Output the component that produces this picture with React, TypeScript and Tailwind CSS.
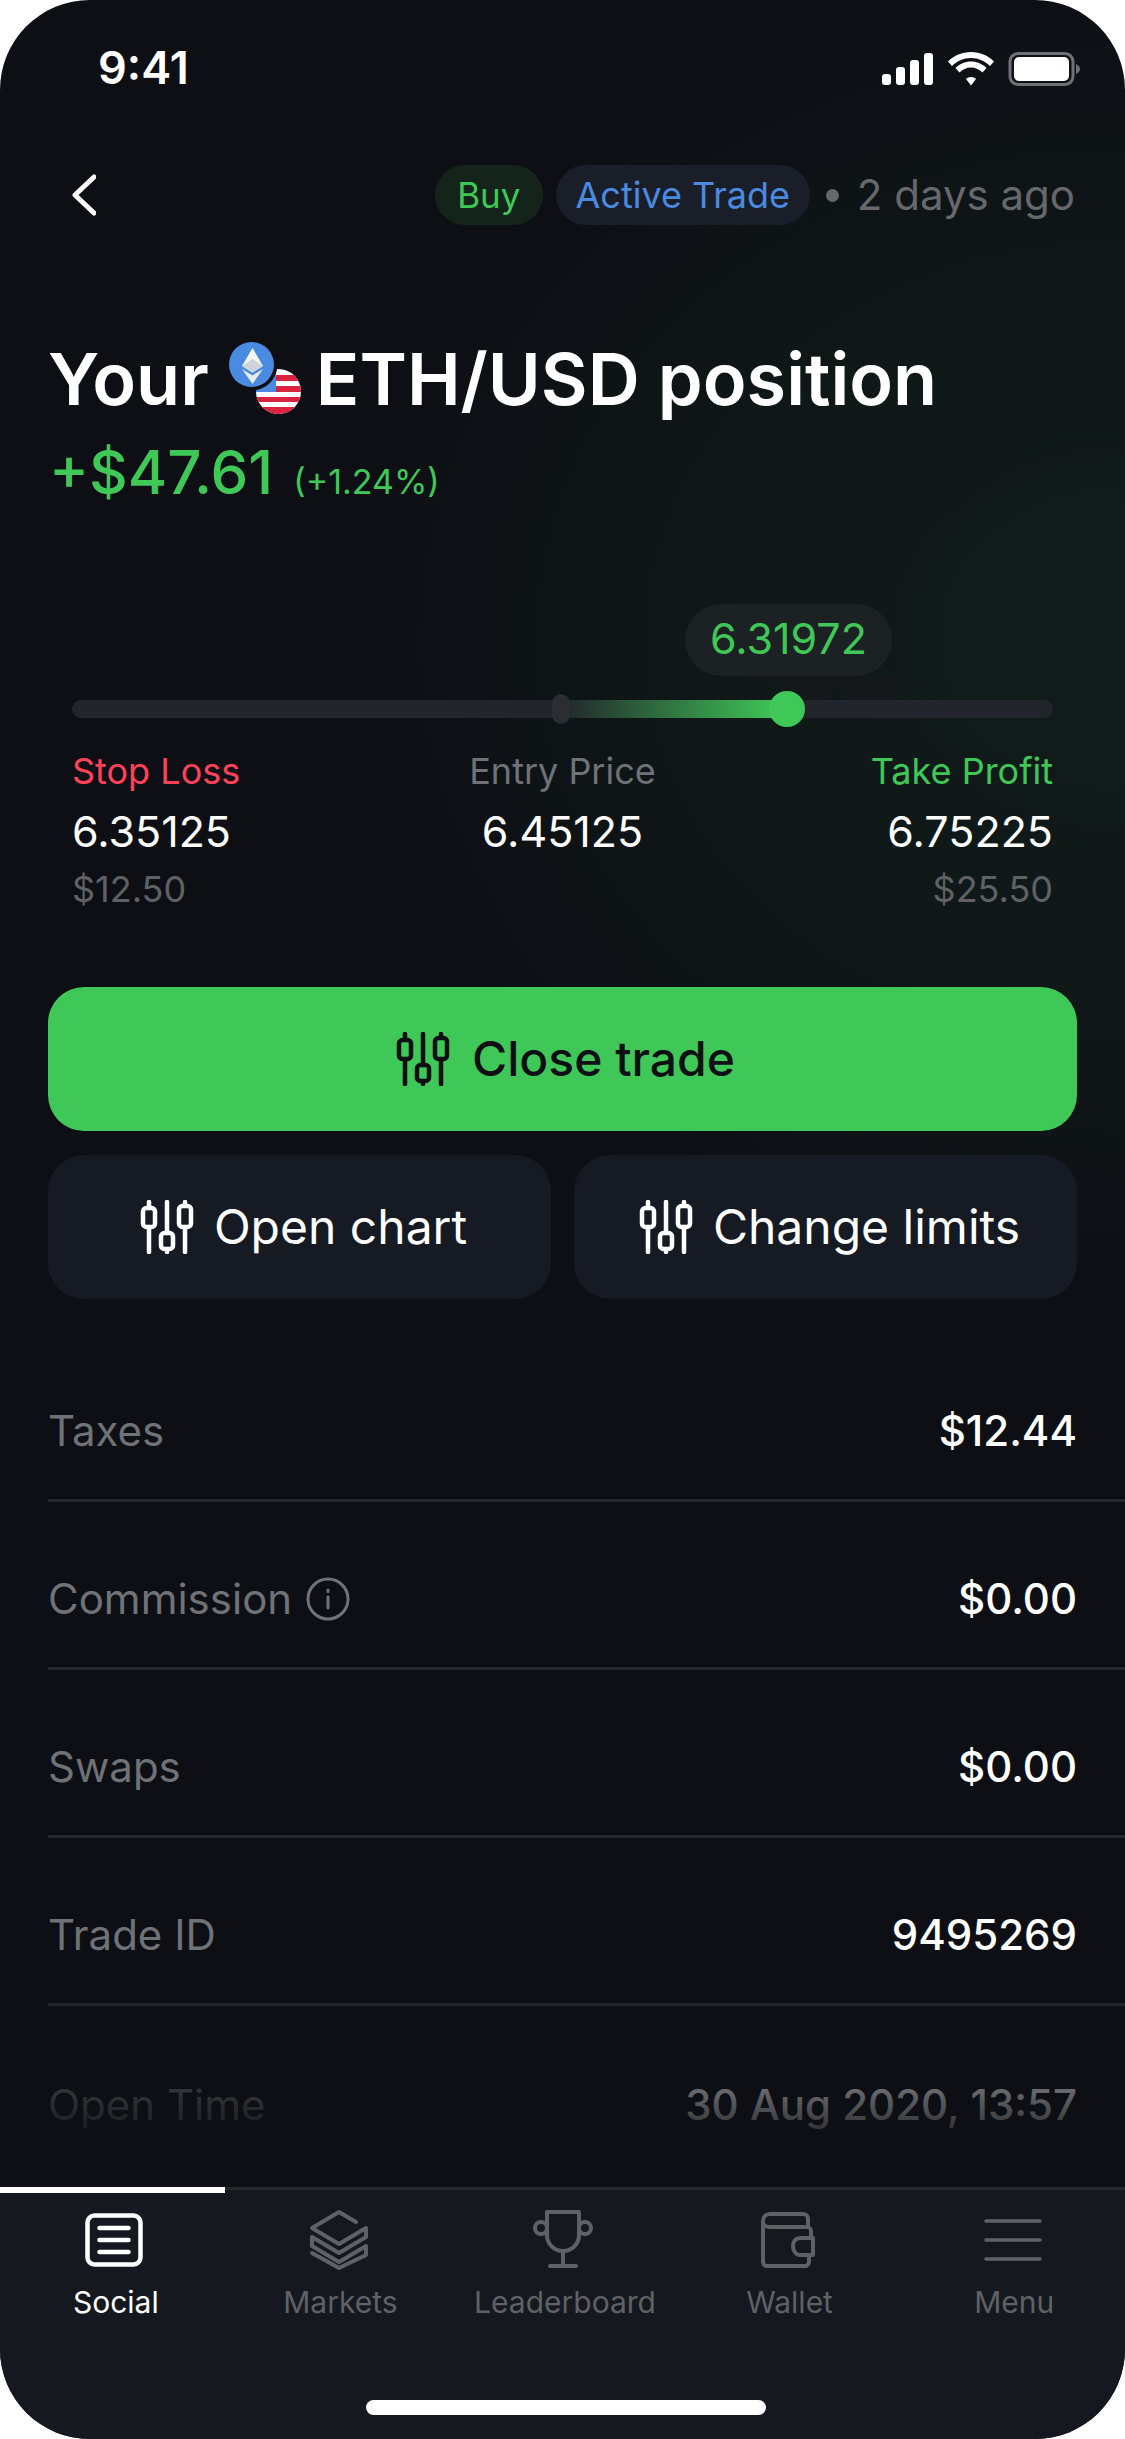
import React from "react";

function CandleIcon({ className }: { className?: string }) {
  return (
    <svg viewBox="0 0 54 54" className={className} fill="none" stroke="currentColor" strokeWidth="4.500" strokeLinecap="round" strokeLinejoin="round">
      <path d="M9 2v6M9 27v25M27 2v31M27 49v3M45 2v3M45 27v25" />
      <rect x="3" y="8" width="12" height="19" rx="3.500" />
      <rect x="21" y="33" width="12" height="16" rx="3.500" />
      <rect x="39" y="6" width="12" height="21" rx="3.500" />
    </svg>
  );
}

function PairIcon() {
  return (
    <svg viewBox="0 0 72 72" className="w-[72px] h-[72px] shrink-0">
      <defs>
        <clipPath id="flag">
          <circle cx="49.5" cy="49.5" r="22.5" />
        </clipPath>
      </defs>
      <g clipPath="url(#flag)">
        <rect x="27" y="27" width="45" height="45" fill="#fff" />
        <rect x="27" y="33" width="45" height="6" fill="#d9233f" />
        <rect x="27" y="44" width="45" height="6" fill="#d9233f" />
        <rect x="27" y="55" width="45" height="5" fill="#d9233f" />
        <rect x="27" y="65" width="45" height="7" fill="#d9233f" />
        <rect x="27" y="27" width="20" height="23" fill="#4a8ae0" />
        <circle cx="40" cy="38" r="2.2" fill="#fff" />
      </g>
      <circle cx="22.5" cy="22.5" r="26" fill="#0d0f14" />
      <circle cx="22.5" cy="22.5" r="22.5" fill="#4a8ae0" />
      <path d="M23.5 6L13 24l10.5 6.5L34 24z" fill="#f4f5f7" />
      <path d="M23.5 17L13 24l10.5 6.5L34 24z" fill="#cfd4da" />
      <path d="M13 27l10.5 15L34 27l-10.5 6.5z" fill="#e9ebee" />
    </svg>
  );
}

function StatusIcons() {
  return (
    <svg viewBox="0 0 200 34" className="w-[200px] h-[34px] block" fill="#fff">
      <rect x="0" y="22" width="9" height="11" rx="3" />
      <rect x="14" y="15" width="9" height="18" rx="3" />
      <rect x="28" y="8" width="9" height="25" rx="3" />
      <rect x="42" y="1" width="9" height="32" rx="3" />
      <path d="M89 0C80 0 72 3.500 66 9.500l4 4.500c5-5 11.500-8 19-8s14 3 19 8l4-4.500C106 3.500 98 0 89 0z" />
      <path d="M89 9.500c-6 0-11.500 2.500-15.500 6.500l4 4.500c3-3 7-5 11.500-5s8.500 2 11.500 5l4-4.500C100.500 12 95 9.500 89 9.500z" />
      <path d="M89 25c2 0 3.800.8 5 2l-5 6.500-5-6.500c1.200-1.200 3-2 5-2z" />
      <rect x="128" y="1.500" width="63" height="31" rx="8" fill="none" stroke="#6f7175" strokeWidth="3" />
      <rect x="132" y="5" width="55" height="24" rx="5" />
      <path d="M194 12c2.500 1 4 3 4 5s-1.500 4-4 5z" fill="#6f7175" />
    </svg>
  );
}

function SocialIcon() {
  return (
    <svg viewBox="0 0 58 54" className="w-[58px] h-[54px]" fill="none" stroke="#fff" strokeWidth="4.500" strokeLinecap="round">
      <rect x="2.500" y="2.500" width="53" height="49" rx="7" />
      <path d="M14.500 15h29M14.500 27h29M14.500 39h29" />
    </svg>
  );
}

function MarketsIcon() {
  return (
    <svg viewBox="0 0 60 62" className="w-[60px] h-[62px]" fill="none" stroke="#5f6165" strokeWidth="4" strokeLinecap="round" strokeLinejoin="round">
      <path d="M47 13L30 3 3 19l27 16 27-16v9L30 44 3 28v9l27 16 27-16v9L30 59 3 44" />
    </svg>
  );
}

function TrophyIcon() {
  return (
    <svg viewBox="0 0 60 60" className="w-[60px] h-[60px]" fill="none" stroke="#5f6165" strokeWidth="4" strokeLinecap="round" strokeLinejoin="round">
      <path d="M14 2h32v23c0 9-7 16-16 16s-16-7-16-16z" />
      <path d="M30 41v15M17 56h26" />
      <circle cx="8" cy="18" r="6" />
      <circle cx="52" cy="18" r="6" />
    </svg>
  );
}

function WalletIcon() {
  return (
    <svg viewBox="0 0 54 56" className="w-[54px] h-[56px]" fill="none" stroke="#5f6165" strokeWidth="4" strokeLinecap="round" strokeLinejoin="round">
      <path d="M47 14V7c0-3-2-5-5-5H9C5 2 2 5 2 9v41c0 2 2 4 4 4h38c2 0 4-2 4-4v-6" />
      <path d="M2 10c0 3 3 5 6 5h38c2 0 4 2 4 4v7" />
      <path d="M52 26H39c-4 0-7 3-7 8s3 9 7 9h13z" />
    </svg>
  );
}

function MenuIcon() {
  return (
    <svg viewBox="0 0 58 44" className="w-[58px] h-[44px]" fill="none" stroke="#5f6165" strokeWidth="3.500" strokeLinecap="round">
      <path d="M2 3h54M2 22h54M2 41h54" />
    </svg>
  );
}

const rows = [
  { label: "Taxes", value: "$12.44" },
  { label: "Commission", value: "$0.00", info: true },
  { label: "Swaps", value: "$0.00" },
  { label: "Trade ID", value: "9495269" },
];

const tabs = [
  { label: "Social", icon: <SocialIcon />, active: true },
  { label: "Markets", icon: <MarketsIcon /> },
  { label: "Leaderboard", icon: <TrophyIcon /> },
  { label: "Wallet", icon: <WalletIcon /> },
  { label: "Menu", icon: <MenuIcon /> },
];

export default function App() {
  return (
    <div className="w-[1125px] h-[2439px] bg-white overflow-hidden font-['Inter',sans-serif]">
      <div className="relative w-full h-full rounded-[90px] overflow-hidden bg-[#0d0f14] flex flex-col">
        <div className="absolute inset-0 bg-[radial-gradient(760px_640px_at_1120px_640px,rgba(38,100,58,0.16),rgba(38,100,58,0.09)_60%,transparent_100%)]" />

        <div className="relative flex flex-col flex-1 min-h-0">
          {/* status bar */}
          <div className="h-[136px] flex justify-between pl-[98px] pr-[43px] pt-[42px]">
            <span className="text-[45px] leading-[52px] font-semibold text-white">9:41</span>
            <div className="pt-[10px]">
              <StatusIcons />
            </div>
          </div>

          {/* header */}
          <div className="h-[90px] flex items-center justify-between pl-[72px] pr-[50px] mt-[14px]">
            <svg viewBox="0 0 24 42" className="w-[24px] h-[42px]" fill="none" stroke="#fff" strokeWidth="5" strokeLinecap="round" strokeLinejoin="round">
              <path d="M22 3L3 21l19 18" />
            </svg>
            <div className="flex items-center text-[42px] leading-[60px]">
              <span className="h-[60px] w-[108px] rounded-[30px] bg-[#14241b] text-[#3fc858] text-[35px] flex items-center justify-center">Buy</span>
              <span className="h-[60px] w-[254px] ml-[13px] rounded-[30px] bg-[#1a1e29] text-[#4a8ae0] text-[36px] flex items-center justify-center">Active Trade</span>
              <span className="w-[13px] h-[13px] rounded-full bg-[#66686c] ml-[16px]" />
              <span className="text-[#66686c] ml-[18px]">2 days ago</span>
            </div>
          </div>

          {/* title */}
          <div className="flex items-center pl-[48px] h-[86px] mt-[96px] text-[72px] leading-[86px] font-semibold text-white">
            <span>Your</span>
            <span className="ml-[20px] -mt-[2px]">
              <PairIcon />
            </span>
            <span className="ml-[15px]">ETH/USD position</span>
          </div>
          <div className="flex items-baseline pl-[49px] mt-[15px] h-[70px] text-[#3fc858]">
            <span className="text-[60px] leading-[70px] font-medium">+$47.61</span>
            <span className="text-[34px] ml-[20px]">(+1.24%)</span>
          </div>

          {/* price range */}
          <div className="relative mt-[97px] mx-[72px] h-[123px]">
            <svg viewBox="0 0 150 26" className="absolute left-[680px] top-[72px] w-[150px] h-[26px]" fill="#14181b">
              <path d="M0 0h150l-4 26H92l-8-21-6 21H58L34 8 0 5z" />
            </svg>
            <div className="absolute left-[613px] top-0 w-[207px] h-[72px] pb-[3px] rounded-[36px] bg-[#1c2124] text-[#3fc858] text-[43px] flex items-center justify-center">6.31972</div>
            <div className="absolute left-0 right-0 top-[96px] h-[18px] rounded-full bg-[#22262c]" />
            <div className="absolute left-[490px] top-[96px] w-[220px] h-[18px] bg-gradient-to-r from-transparent to-[#3fc858]" />
            <div className="absolute left-[480px] top-[90px] w-[18px] h-[30px] rounded-full bg-[#2a2e33]" />
            <div className="absolute left-[697px] top-[87px] w-[36px] h-[36px] rounded-full bg-[#3fc858]" />
          </div>

          <div className="mx-[72px] mt-[22px] grid grid-cols-3 text-[36px] leading-[44px]">
            <div className="flex flex-col">
              <span className="text-[#ff4159]">Stop Loss</span>
              <span className="text-white text-[43px] leading-[48px] mt-[14px]">6.35125</span>
              <span className="text-[#5f6165] mt-[12px]">$12.50</span>
            </div>
            <div className="flex flex-col items-center">
              <span className="text-[#6f7276]">Entry Price</span>
              <span className="text-white text-[43px] leading-[48px] mt-[14px]">6.45125</span>
            </div>
            <div className="flex flex-col items-end">
              <span className="text-[#3fc858]">Take Profit</span>
              <span className="text-white text-[43px] leading-[48px] mt-[14px]">6.75225</span>
              <span className="text-[#5f6165] mt-[12px]">$25.50</span>
            </div>
          </div>

          {/* actions */}
          <div className="mx-[48px] mt-[76px] flex flex-col gap-[24px]">
            <button className="h-[144px] pl-[6px] rounded-[36px] bg-[#3fc858] text-[#0d0f14] text-[48px] font-medium flex items-center justify-center gap-[22px]">
              <CandleIcon className="w-[54px] h-[54px]" />
              Close trade
            </button>
            <div className="grid grid-cols-2 gap-[23px]">
              <button className="h-[144px] pl-[8px] rounded-[36px] bg-[#161a23] text-white text-[48px] flex items-center justify-center gap-[20px]">
                <CandleIcon className="w-[54px] h-[54px]" />
                Open chart
              </button>
              <button className="h-[144px] pl-[8px] rounded-[36px] bg-[#161a23] text-white text-[48px] flex items-center justify-center gap-[20px]">
                <CandleIcon className="w-[54px] h-[54px]" />
                Change limits
              </button>
            </div>
          </div>

          {/* details */}
          <div className="relative mt-[35px] pl-[48px] flex-1 min-h-0 overflow-hidden">
            {rows.map((row) => (
              <div key={row.label} className="h-[168px] pt-[28px] flex items-center justify-between pr-[48px] border-b-[3px] border-[#22272b] text-[42px]">
                <span className="flex items-center gap-[14px] text-[#6f7276]">
                  {row.label}
                  {row.info && (
                    <svg viewBox="0 0 44 44" className="w-[44px] h-[44px]" fill="none" stroke="#6f7276" strokeWidth="3">
                      <circle cx="22" cy="22" r="20" />
                      <path d="M22 20v11M22 13v1.500" strokeLinecap="round" />
                    </svg>
                  )}
                </span>
                <span className="text-white font-medium">{row.value}</span>
              </div>
            ))}
            <div className="h-[168px] pt-[28px] flex items-center justify-between pr-[48px] text-[42px]">
              <span className="text-[#6f7276]">Open Time</span>
              <span className="text-white font-medium">30 Aug 2020, 13:57</span>
            </div>
            <div className="absolute left-0 right-0 bottom-0 h-[207px] bg-gradient-to-b from-transparent to-[#0d0f14] to-85%" />
          </div>

          {/* tab bar */}
          <div className="relative h-[252px] shrink-0 bg-[#15181f] border-t-[3px] border-[#24272c] flex pl-[2px]">
            <div className="absolute left-0 -top-[3px] w-[225px] h-[6px] bg-white" />
            {tabs.map((tab) => (
              <div key={tab.label} className="w-[225px] h-[130px] flex flex-col items-center">
                <div className="h-[84px] flex items-center justify-center pt-[18px]">{tab.icon}</div>
                <span className={`mt-[12px] ml-[3px] text-[30px] leading-[36px] ${tab.active ? "text-white" : "text-[#5f6165]"}`}>{tab.label}</span>
              </div>
            ))}
            <div className="absolute left-[366px] top-[210px] w-[400px] h-[15px] rounded-full bg-white" />
          </div>
        </div>
      </div>
    </div>
  );
}
